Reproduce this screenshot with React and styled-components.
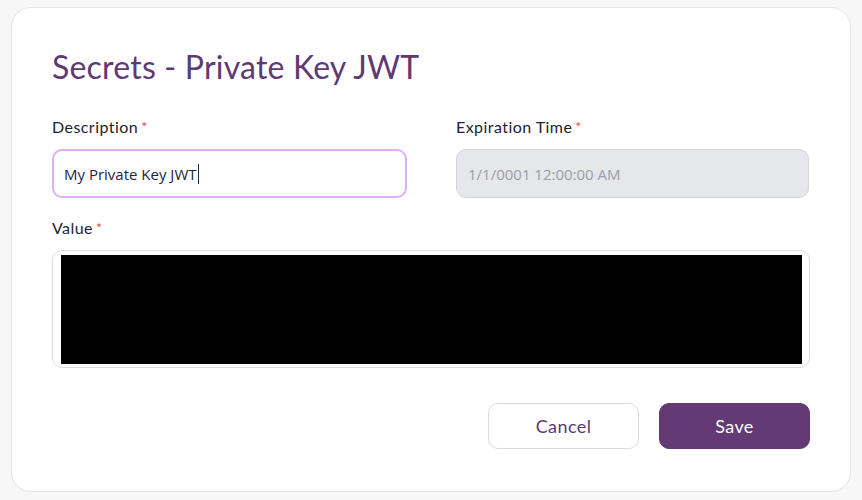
import React from "react";
import styled, { createGlobalStyle } from "styled-components";

const Global = createGlobalStyle`
  html, body { margin: 0; padding: 0; background: #f7f7f8; }
  body { font-family: "Lato", "Noto Sans", sans-serif; }
  * { box-sizing: border-box; }
`;

const Page = styled.div`
  width: 862px;
  height: 500px;
  padding: 7px 11px 8px 11px;
`;

const Card = styled.div`
  width: 840px;
  height: 485px;
  background: #ffffff;
  border: 1px solid #e6e6e9;
  border-radius: 20px;
  padding: 41px 40px 0 40px;
  display: flex;
  flex-direction: column;
`;

const Title = styled.h1`
  margin: 0;
  font-family: "Lato", sans-serif;
  font-weight: 400;
  font-size: 32px;
  line-height: 36px;
  color: #5e3a75;
  letter-spacing: 0.2px;
`;

const Row = styled.div`
  display: grid;
  grid-template-columns: 355px 353px;
  column-gap: 49px;
  margin-top: 32px;
`;

const Field = styled.div`
  display: flex;
  flex-direction: column;
`;

const Label = styled.label`
  font-family: "Lato", sans-serif;
  font-size: 16px;
  line-height: 20px;
  color: #1f2233;
  margin-bottom: 12px;
  letter-spacing: 0.45px;
`;

const Star = styled.span`
  color: #e5484d;
  font-size: 14px;
  margin-left: 3px;
  vertical-align: top;
`;

const Input = styled.div`
  height: 49px;
  border-radius: 10px;
  display: flex;
  align-items: center;
  padding: 0 ${(p) => (p.$focused ? "10px" : "11px")};
  font-family: "Open Sans", sans-serif;
  font-size: 15px;
  border: ${(p) => (p.$focused ? "2px solid #dcb1f3" : "1px solid #d4d6db")};
  background: ${(p) => (p.$disabled ? "#e5e7eb" : "#ffffff")};
  color: ${(p) => (p.$disabled ? "#9a9ea6" : "#1f2540")};
`;

const Caret = styled.span`
  display: inline-block;
  width: 1px;
  height: 20px;
  background: #1f2540;
  margin-left: 1px;
`;

const ValueField = styled(Field)`
  margin-top: 20px;
`;

const ValueBox = styled.div`
  height: 118px;
  border: 1px solid #dcdce0;
  border-radius: 10px;
  padding: 4px 7px 3px 8px;
`;

const Redacted = styled.div`
  width: 100%;
  height: 100%;
  background: #000;
`;

const Actions = styled.div`
  display: flex;
  justify-content: flex-end;
  gap: 20px;
  margin-top: 35px;
`;

const Button = styled.button`
  width: 151px;
  height: 46px;
  border-radius: 10px;
  font-family: "Lato", sans-serif;
  font-size: 18px;
  letter-spacing: 0.4px;
  cursor: pointer;
  border: ${(p) => (p.$primary ? "1px solid #633a74" : "1px solid #ddd8e6")};
  background: ${(p) => (p.$primary ? "#633a74" : "#ffffff")};
  color: ${(p) => (p.$primary ? "#ffffff" : "#5e3a75")};
`;

export default function App() {
  return (
    <Page>
      <Global />
      <Card>
        <Title>Secrets - Private Key JWT</Title>
        <Row>
          <Field>
            <Label>
              Description<Star>*</Star>
            </Label>
            <Input $focused>
              My Private Key JWT<Caret />
            </Input>
          </Field>
          <Field>
            <Label>
              Expiration Time<Star>*</Star>
            </Label>
            <Input $disabled>1/1/0001 12:00:00 AM</Input>
          </Field>
        </Row>
        <ValueField>
          <Label>
            Value<Star>*</Star>
          </Label>
          <ValueBox>
            <Redacted />
          </ValueBox>
        </ValueField>
        <Actions>
          <Button>Cancel</Button>
          <Button $primary>Save</Button>
        </Actions>
      </Card>
    </Page>
  );
}
